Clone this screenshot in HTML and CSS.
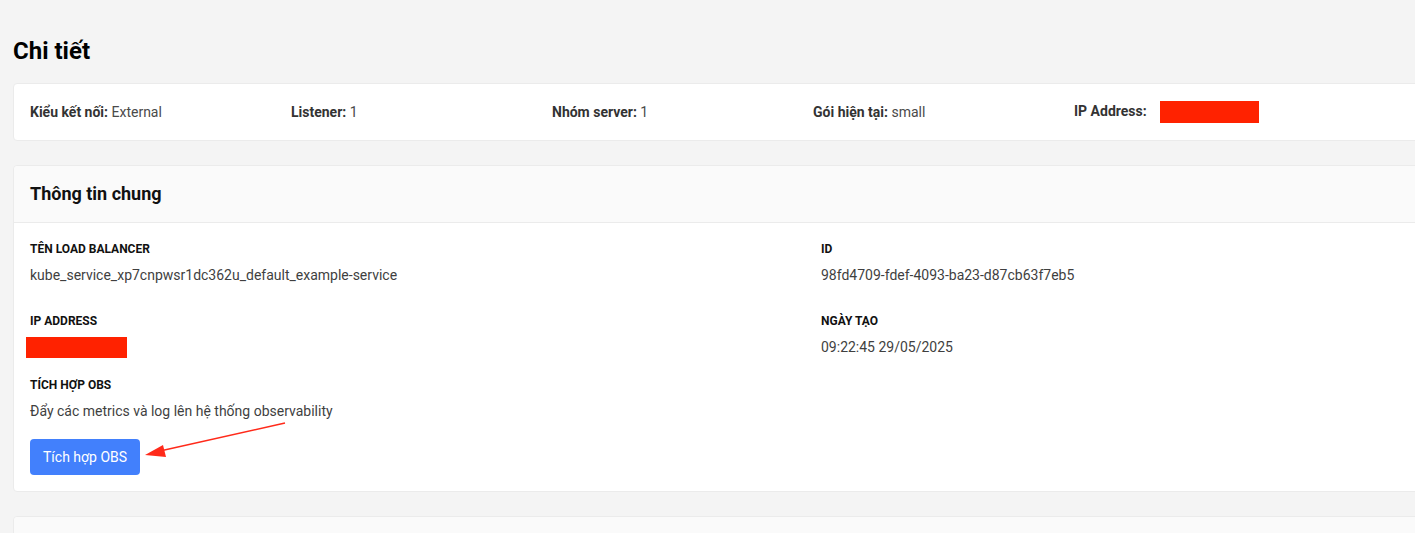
FILE: index.html
```html
<!DOCTYPE html>
<html lang="vi">
<head>
<meta charset="UTF-8">
<meta name="viewport" content="width=device-width, initial-scale=1.0">
<title>Chi tiết Load Balancer</title>
<link rel="stylesheet" href="styles.css">
</head>
<body>
<div class="page">
  <h1>Chi tiết</h1>

  <div class="card summary">
    <div class="summaryItem"><b>Kiểu kết nối:</b> External</div>
    <div class="summaryItem"><b>Listener:</b> 1</div>
    <div class="summaryItem"><b>Nhóm server:</b> 1</div>
    <div class="summaryItem"><b>Gói hiện tại:</b> small</div>
    <div class="summaryItem"><b>IP Address:</b> <span class="redact redactInline"></span></div>
  </div>

  <div class="card">
    <div class="cardHeader">Thông tin chung</div>
    <div class="cardBody">
      <div class="infoGrid">
        <div class="field">
          <div class="fieldLabel">Tên load balancer</div>
          <div class="fieldValue">kube_service_xp7cnpwsr1dc362u_default_example-service</div>
        </div>
        <div class="field">
          <div class="fieldLabel">ID</div>
          <div class="fieldValue">98fd4709-fdef-4093-ba23-d87cb63f7eb5</div>
        </div>
        <div class="field">
          <div class="fieldLabel">IP Address</div>
          <div class="fieldValue"><span class="redact redactBlock"></span></div>
        </div>
        <div class="field">
          <div class="fieldLabel">Ngày tạo</div>
          <div class="fieldValue">09:22:45 29/05/2025</div>
        </div>
      </div>
      <div class="obs">
        <div class="fieldLabel">Tích hợp OBS</div>
        <div class="fieldValue">Đẩy các metrics và log lên hệ thống observability</div>
        <button type="button" class="obsBtn">Tích hợp OBS</button>
        <svg class="arrow" width="170" height="55" viewBox="0 0 170 55" aria-hidden="true">
          <line x1="155" y1="13" x2="30" y2="41" stroke="#ff2a1a" stroke-width="1.5"/>
          <polygon points="15,45 33,35 36,47" fill="#ff2a1a"/>
        </svg>
      </div>
    </div>
  </div>

  <div class="card">
    <div class="cardHeader">THÔNG TIN NHIỄM VỤ</div>
  </div>
</div>
</body>
</html>
```

FILE: styles.css
```css
html, body { margin:0; padding:0; overflow:hidden; }
body { font-family:Roboto,"Noto Sans",Arial,sans-serif; background:#f4f4f4; color:#444; height:533px; }
.page { width:1640px; padding:35px 0 0 13px; box-sizing:border-box; }
h1 { font-size:24px; line-height:32px; font-weight:700; color:#000; margin:0 0 16px; }
.card { background:#fff; border:1px solid #ebebeb; border-radius:4px; margin-bottom:24px; }
.summary { display:grid; grid-template-columns:repeat(5, 261px); align-items:center; padding:16px 16px 17px; font-size:14px; line-height:22px; color:#4a4a4a; }
.summary b { color:#333; font-weight:700; }
.redact { display:inline-block; background:#ff2200; }
.redactInline { width:99px; height:22px; vertical-align:middle; margin-left:10px; }
.redactBlock { width:101px; height:21px; margin-left:-4px; vertical-align:top; }
.cardHeader { background:#fafafa; border-bottom:1px solid #ebebeb; padding:16px; font-size:18px; line-height:24px; font-weight:700; color:#111; border-radius:4px 4px 0 0; }
.cardBody { padding:18px 16px 16px; position:relative; }
.infoGrid { display:grid; grid-template-columns:791px 791px; row-gap:28px; }
.fieldLabel { font-size:12px; line-height:16px; font-weight:700; color:#111; text-transform:uppercase; }
.fieldValue { font-size:14px; line-height:20px; color:#3f3f3f; margin-top:8px; height:20px; }
.obs { margin-top:20px; position:relative; }
.obsBtn { margin-top:18px; display:block; height:36px; padding:0 13px; background:#4280fc; color:#fff; border:none; border-radius:4px; font-family:inherit; font-size:14px; cursor:pointer; }
.arrow { position:absolute; left:100px; top:33px; }
```
